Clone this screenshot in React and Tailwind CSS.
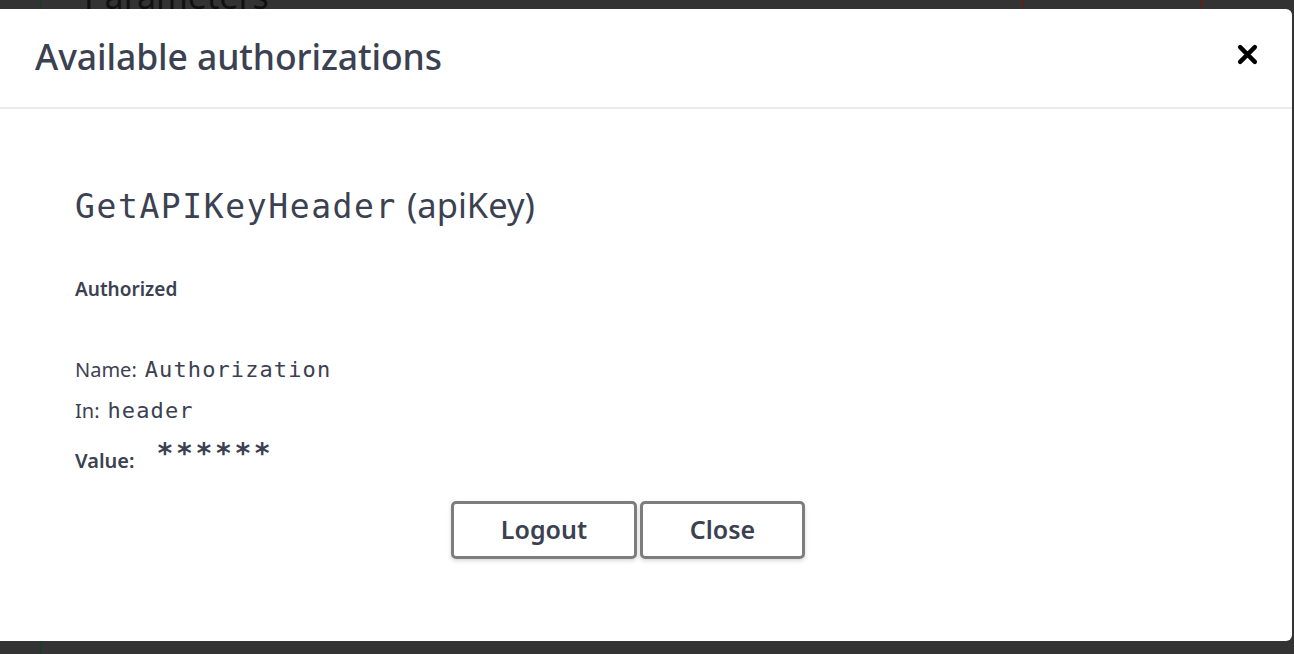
import React from 'react';

const sans = { fontFamily: '"Noto Sans", "Open Sans", sans-serif' };
const mono = { fontFamily: '"DejaVu Sans Mono", monospace' };

const App = () => {
  return (
    <div className="min-h-[654px] w-full bg-[#333333] overflow-hidden flex flex-col" style={sans}>
      {/* page behind the overlay, cut off at the top */}
      <div className="h-[9px] overflow-hidden flex items-end">
        <div className="h-[9px] w-[2px] bg-[#1f3a2a] ml-[40px]" />
        <span className="ml-[42px] -mb-[4px] text-[34px] leading-none text-[#111]">Parameters</span>
        <div className="ml-auto mr-[92px] h-[9px] w-[180px] border-x-2 border-[#5a1f1f]" />
      </div>

      <div className="w-[1292px] h-[632px] bg-white rounded-r-[6px] flex flex-col text-[#3b4151]">
        {/* header */}
        <div className="h-[100px] border-b-2 border-[#ebebeb] flex items-center justify-between pl-[35px] pr-[34px]">
          <h3 className="text-[35.5px] font-medium tracking-[-0.1px] -mt-[3px]">Available authorizations</h3>
          <button className="text-black -mt-[7px]">
            <svg width="21" height="21" viewBox="0 0 20 20">
              <path d="M3 3 L17 17 M17 3 L3 17" stroke="currentColor" strokeWidth="4.2" strokeLinecap="round" />
            </svg>
          </button>
        </div>

        {/* body */}
        <div className="flex flex-col pl-[75px] pt-[70px]">
          <h4 className="flex items-baseline h-[44px]">
            <code className="text-[33px] tracking-[1.6px]" style={mono}>
              GetAPIKeyHeader
            </code>
            <span className="ml-[10px] text-[34.5px]">(apiKey)</span>
          </h4>

          <h6 className="mt-[52px] text-[19px] font-semibold">Authorized</h6>

          <div className="mt-[49px] flex flex-col">
            <p className="flex items-baseline h-[41px] text-[20px]">
              Name:
              <code className="ml-[8px] text-[22px] tracking-[1.1px]" style={mono}>
                Authorization
              </code>
            </p>
            <p className="flex items-baseline h-[42px] text-[20px]">
              In:
              <code className="ml-[8px] text-[22px] tracking-[1.1px]" style={mono}>
                header
              </code>
            </p>
            <div className="flex items-center h-[44px]">
              <label className="text-[20px] font-semibold mt-[6px]">Value:</label>
              <code className="ml-[22px] text-[28px] tracking-[2.6px] font-bold -mt-[8px]" style={mono}>
                ******
              </code>
            </div>
          </div>

          <div className="flex justify-center gap-[3px] mt-[21px] pr-[111px]">
            <button className="h-[58px] w-[186px] border-[3px] border-[#7d7d7d] rounded-[5px] shadow-[0_2px_4px_rgba(0,0,0,0.15)] text-[25px] font-semibold text-[#3b4151]">
              Logout
            </button>
            <button className="h-[58px] w-[165px] border-[3px] border-[#7d7d7d] rounded-[5px] shadow-[0_2px_4px_rgba(0,0,0,0.15)] text-[25px] font-semibold text-[#3b4151]">
              Close
            </button>
          </div>
        </div>
      </div>

      <div className="flex-1 flex">
        <div className="w-[2px] bg-[#1f3a2a] ml-[40px]" />
      </div>
    </div>
  );
};

export default App;
